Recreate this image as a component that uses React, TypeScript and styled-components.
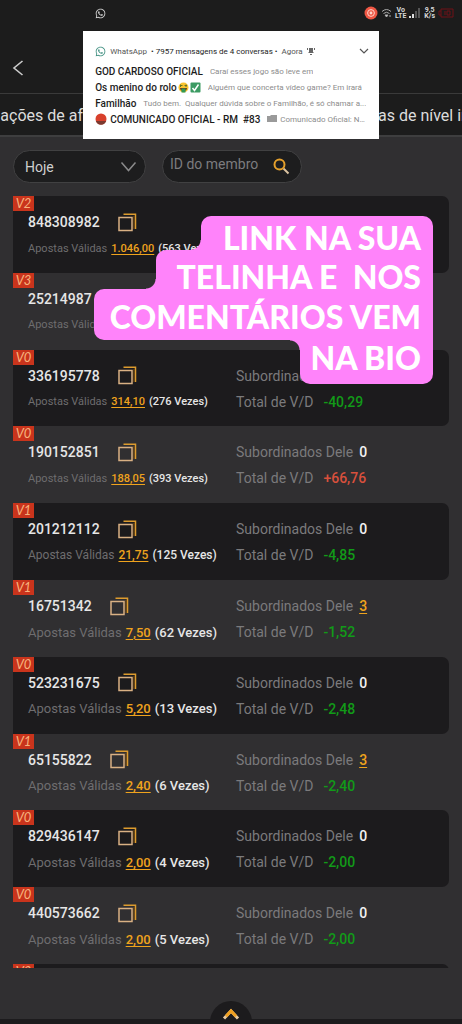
import React from "react";
import styled, { createGlobalStyle } from "styled-components";
import { FaWhatsapp } from "react-icons/fa";

const GlobalStyle = createGlobalStyle`
  * { box-sizing: border-box; }
  body {
    margin: 0;
    background: #302f31;
    font-family: Roboto, "Liberation Sans", sans-serif;
    color: #e6e6e6;
  }
  button, input, select { font: inherit; color: inherit; }
  svg { flex-shrink: 0; }
`;

const Page = styled.div`
  position: relative;
  display: flex;
  flex-direction: column;
  min-height: 100vh;
  overflow: hidden;
`;

const StatusBar = styled.div`
  display: flex;
  align-items: center;
  justify-content: space-between;
  height: 26px;
  padding: 0 8px 0 95px;
  background: #1c1c1c;
  color: #d8d8d8;
`;

const StatusIcons = styled.div`
  display: flex;
  align-items: center;
  gap: 3px;
`;

const Stacked = styled.span`
  font-size: 7px;
  line-height: 6px;
  font-weight: 700;
  text-align: center;
`;

const TitleBar = styled.header`
  display: flex;
  align-items: center;
  height: 68px;
  padding: 16px 0 0 4px;
  background: #1c1c1c;
  border-bottom: 1px solid #3a3a3a;
`;

const BackButton = styled.button`
  display: grid;
  place-items: center;
  width: 28px;
  height: 28px;
  padding: 0;
  border: 0;
  background: none;
`;

const TabStrip = styled.nav`
  display: grid;
  grid-template-columns: 83px 1fr 84px;
  height: 43px;
  background: #1c1c1c;
  border-bottom: 2px solid #3e3e3f;
  line-height: 43px;
  font-size: 16px;
`;

const TabText = styled.a<{ $end?: boolean }>`
  display: flex;
  justify-content: ${(p) => (p.$end ? "flex-end" : "flex-start")};
  overflow: hidden;
  white-space: nowrap;
  color: #dcdcdc;
  text-decoration: none;
`;

const Notification = styled.section`
  position: absolute;
  top: 31px;
  left: 18%;
  right: 18%;
  height: 108px;
  padding: 12px 10px 0 12px;
  background: #fff;
  color: #1c1c1c;
`;

const NoticeHead = styled.div`
  display: flex;
  align-items: center;
  gap: 4px;
  height: 16px;
  margin-bottom: 4px;
  font-size: 8px;
  white-space: nowrap;
`;

const NoticeApp = styled.span`
  color: #555;
`;

const NoticeToggle = styled.button`
  display: grid;
  margin-left: auto;
  padding: 0;
  border: 0;
  background: none;
`;

const NoticeLine = styled.div`
  display: flex;
  align-items: center;
  height: 16px;
  white-space: nowrap;
  font-size: 8px;
`;

const Sender = styled.strong`
  display: flex;
  align-items: center;
  gap: 1px;
  margin-right: 7px;
  font-size: 10px;
  font-weight: 500;
`;

const Snippet = styled.span`
  color: #8c8c8c;
  overflow: hidden;
  text-overflow: ellipsis;
`;

const Filters = styled.form`
  display: flex;
  gap: 16px;
  padding: 13px 14px 13px 13px;
`;

const Pill = styled.div<{ $width: number }>`
  position: relative;
  display: flex;
  align-items: center;
  width: ${(p) => p.$width}px;
  height: 33px;
  border: 1px solid #414142;
  border-radius: 17px;
  background: #1d1d1e;
  font-size: 14px;
`;

const PeriodSelect = styled.select`
  appearance: none;
  width: 100%;
  height: 100%;
  padding: 0 36px 0 11px;
  border: 0;
  background: none;
  outline: none;
  color: #cfcfcf;
`;

const SelectArrow = styled.svg`
  position: absolute;
  right: 8px;
  pointer-events: none;
`;

const MemberInput = styled.input`
  flex: 1;
  min-width: 0;
  height: 100%;
  padding: 0 0 6px 7px;
  border: 0;
  background: none;
  outline: none;
  &::placeholder { color: #7c7c7e; opacity: 1; }
`;

const SearchButton = styled.button`
  display: grid;
  padding: 0;
  margin-right: 11px;
  border: 0;
  background: none;
`;

const List = styled.ul`
  display: grid;
  grid-template-rows: repeat(10, 1fr) 4px;
  margin: 0 13px;
  padding: 0;
  height: 772px;
  overflow: hidden;
  list-style: none;
`;

const Row = styled.li`
  position: relative;
  display: grid;
  grid-template-columns: 208px 1fr;
  grid-template-rows: 26px 26px;
  align-content: start;
  align-items: center;
  padding: 13px 0 0 15px;
  border-radius: 0 7px 7px 0;
  &:nth-child(odd) { background: #1c1b1d; }
`;

const Level = styled.span`
  position: absolute;
  top: 0;
  left: 0;
  width: 21px;
  height: 15px;
  background: #c9341c;
  color: #f7b27c;
  font: italic 13px/15px Lato, sans-serif;
  text-align: center;
`;

const Member = styled.div`
  display: flex;
  align-items: center;
  gap: 18px;
  font-size: 14px;
  font-weight: 500;
`;

const CopyButton = styled.button`
  display: grid;
  padding: 0;
  border: 0;
  background: none;
`;

const Bets = styled.div<{ $size: number }>`
  display: flex;
  gap: 4px;
  font-size: ${(p) => p.$size}px;
  color: #6e6d6f;
  white-space: nowrap;
`;

const Gold = styled.a`
  color: #efa31d;
  font-weight: 500;
  text-decoration: underline;
  text-underline-offset: 2px;
`;

const Times = styled.span`
  color: #e6e6e6;
  font-weight: 500;
`;

const Stat = styled.div`
  display: flex;
  gap: 6px;
  font-size: 14px;
  color: #7b7a7c;
  white-space: nowrap;
`;

const Count = styled.span`
  color: #f2f2f2;
  font-weight: 500;
`;

const Balance = styled.span<{ $gain: boolean }>`
  margin-left: 4px;
  color: ${(p) => (p.$gain ? "#d8503c" : "#129a18")};
  font-weight: 500;
`;

const Caption = styled.div`
  position: absolute;
  top: 216px;
  right: 29px;
  display: flex;
  flex-direction: column;
  align-items: flex-end;
  color: #fff;
  font: 900 32px/24px Lato, sans-serif;
  white-space: pre;
`;

const CaptionLine = styled.div<{
  $width: number;
  $pad: string;
  $radius: string;
  $join?: "top" | "bottom";
}>`
  position: relative;
  width: ${(p) => p.$width}px;
  padding: ${(p) => p.$pad};
  border-radius: ${(p) => p.$radius};
  background: #ff83fa;
  text-align: right;
  &::before {
    content: ${(p) => (p.$join ? '""' : "none")};
    position: absolute;
    left: -10px;
    ${(p) => p.$join ?? "top"}: 0;
    width: 10px;
    height: 10px;
    background: radial-gradient(
      circle at 0 ${(p) => (p.$join === "top" ? "100%" : "0")},
      transparent 9px,
      #ff83fa 10px
    );
  }
`;

const Footer = styled.footer`
  display: flex;
  justify-content: center;
  align-items: flex-end;
  flex: 1;
  border-bottom: 5px solid #1c1b1d;
`;

const UpButton = styled.button`
  display: grid;
  justify-items: center;
  width: 42px;
  height: 23px;
  margin-bottom: -5px;
  padding: 7px 0 0;
  border: 0;
  border-radius: 21px 21px 0 0;
  background: #1c1b1d;
`;

type Entry = {
  level: string;
  id: string;
  bet?: string;
  times?: number;
  size: number;
  subs?: number;
  balance?: string;
};

const entries: Entry[] = [
  { level: "V2", id: "848308982", bet: "1.046,00", times: 563, size: 11 },
  { level: "V3", id: "25214987", size: 11 },
  { level: "V0", id: "336195778", bet: "314,10", times: 276, size: 11, subs: 0, balance: "-40,29" },
  { level: "V0", id: "190152851", bet: "188,05", times: 393, size: 11, subs: 0, balance: "+66,76" },
  { level: "V1", id: "201212112", bet: "21,75", times: 125, size: 12, subs: 0, balance: "-4,85" },
  { level: "V1", id: "16751342", bet: "7,50", times: 62, size: 13, subs: 3, balance: "-1,52" },
  { level: "V0", id: "523231675", bet: "5,20", times: 13, size: 13, subs: 0, balance: "-2,48" },
  { level: "V1", id: "65155822", bet: "2,40", times: 6, size: 13, subs: 3, balance: "-2,40" },
  { level: "V0", id: "829436147", bet: "2,00", times: 4, size: 13, subs: 0, balance: "-2,00" },
  { level: "V0", id: "440573662", bet: "2,00", times: 5, size: 13, subs: 0, balance: "-2,00" },
];

const CopyIcon = () => (
  <svg width="19" height="19" viewBox="0 0 19 19" fill="none" stroke="#dd9c2e" strokeWidth="1.5">
    <path d="M1 4.500h13v13H1z" stroke="#d9b184" />
    <path d="M5.500 1.200h12V16" />
    <path d="M16 3v13" stroke="#7d5010" strokeWidth="1" />
  </svg>
);

const MoneyFace = () => (
  <svg width="11" height="11" viewBox="0 0 22 22">
    <circle cx="11" cy="11" r="10" fill="#f9c32f" />
    <path d="M4 7h5M13 7h5M5 5v5M16 5v5" stroke="#64752b" strokeWidth="2" />
    <path d="M4 12h14c0 4-3 6-7 6s-7-2-7-6z" fill="#6d3820" />
    <path d="M7 13h8v8H7z" fill="#2f9a56" />
  </svg>
);

const CheckBox = () => (
  <svg width="11" height="11" viewBox="0 0 22 22">
    <rect x="1" y="1" width="20" height="20" rx="2" fill="#3c9b63" />
    <path d="M5 12l4 5 8-12" fill="none" stroke="#fff" strokeWidth="3" />
  </svg>
);

export default function App() {
  return (
    <Page>
      <GlobalStyle />
      <StatusBar>
        <FaWhatsapp size={11} />
        <StatusIcons>
          <svg width="14" height="14" viewBox="0 0 14 14">
            <circle cx="7" cy="7" r="6.5" fill="#ef5744" />
            <circle cx="7" cy="7" r="3.4" fill="none" stroke="#ffd4ca" />
            <circle cx="7" cy="7" r="1.4" fill="#ffd4ca" />
          </svg>
          <svg width="11" height="10" viewBox="0 0 11 10" fill="none" stroke="#aaa">
            <path d="M1 3.5q4.5-4 9 0M2.5 5.5q3-2.500 6 0" />
            <path d="M4 7h3L5.500 9zM9 7v2" fill="#ddd" />
          </svg>
          <Stacked>Vo<br />LTE</Stacked>
          <svg width="12" height="10" viewBox="0 0 12 10">
            <path d="M0 8h2v2H0zM3 6h2v4H3z" fill="#ddd" />
            <path d="M6 3h2v7H6zM9 0h2v10H9z" fill="#555" />
          </svg>
          <Stacked>9,5<br />K/s</Stacked>
          <svg width="16" height="10" viewBox="0 0 16 10" fill="none" stroke="#701116">
            <path d="M3 1h12v8H3zM3 3H1v4h2" />
            <path d="M7 3v4M9 3h3v4H9z" />
          </svg>
        </StatusIcons>
      </StatusBar>

      <TitleBar>
        <BackButton aria-label="Voltar">
          <svg width="12" height="16" viewBox="0 0 12 16" fill="none" stroke="#ccc" strokeWidth="1.6">
            <path d="M10.500 1L2 8l8.500 7" />
          </svg>
        </BackButton>
      </TitleBar>

      <TabStrip>
        <TabText href="#afiliados" $end>mações de af</TabText>
        <span />
        <TabText href="#nivel">as de nível in</TabText>
      </TabStrip>

      <Filters>
        <Pill $width={133}>
          <PeriodSelect aria-label="Período" defaultValue="Hoje">
            <option>Hoje</option>
          </PeriodSelect>
          <SelectArrow width="17" height="11" viewBox="0 0 17 11" fill="none" stroke="#8a8a8b" strokeWidth="1.5">
            <path d="M1.500 1.500l7 8 7-8" />
          </SelectArrow>
        </Pill>
        <Pill $width={140}>
          <MemberInput aria-label="ID do membro" placeholder="ID do membro" />
          <SearchButton type="button" aria-label="Buscar">
            <svg width="17" height="17" viewBox="0 0 17 17" fill="none" strokeWidth="2">
              <path d="M10.500 10.500L15.500 15.500" stroke="#dcc3a0" />
              <circle cx="6.500" cy="6.500" r="5" stroke="#e5a02c" />
            </svg>
          </SearchButton>
        </Pill>
      </Filters>

      <List>
        {entries.map((e) => (
          <Row key={e.id}>
            <Level>{e.level}</Level>
            <Member>
              {e.id}
              <CopyButton aria-label="Copiar ID">
                <CopyIcon />
              </CopyButton>
            </Member>
            <Stat>
              {e.subs !== undefined && "Subordinados Dele"}
              {e.subs === 0 && <Count>0</Count>}
              {!!e.subs && <Gold href="#subordinados">{e.subs}</Gold>}
            </Stat>
            <Bets $size={e.size}>
              Apostas Válidas
              {e.bet && <Gold href="#apostas">{e.bet}</Gold>}
              {e.times && <Times>({e.times} Vezes)</Times>}
            </Bets>
            {e.balance && (
              <Stat>
                Total de V/D
                <Balance $gain={e.balance[0] === "+"}>{e.balance}</Balance>
              </Stat>
            )}
          </Row>
        ))}
        <Row>
          <Level>V0</Level>
        </Row>
      </List>

      <Footer>
        <UpButton aria-label="Subir">
          <svg width="18" height="12" viewBox="0 0 18 12" fill="none" strokeWidth="3">
            <path d="M2 10.500l7-7.500 7 7.500" stroke="#e8c9a0" />
            <path d="M4 8.300l5-5.300 5 5.300" stroke="#f0a020" />
          </svg>
        </UpButton>
      </Footer>

      <Caption>
        <CaptionLine $width={232} $pad="10px 12px 0 0" $radius="10px 10px 0 0" $join="bottom">LINK NA SUA</CaptionLine>
        <CaptionLine $width={277} $pad="15px 12px 0 0" $radius="10px 0 0 0" $join="bottom">{"TELINHA E  NOS"}</CaptionLine>
        <CaptionLine $width={339} $pad="16px 12px 11px 0" $radius="10px 0 0 10px">COMENTÁRIOS VEM</CaptionLine>
        <CaptionLine $width={133} $pad="6px 12px 14px 0" $radius="0 0 10px 10px" $join="top">NA BIO</CaptionLine>
      </Caption>

      <Notification>
        <NoticeHead>
          <FaWhatsapp size={11} color="#3f8f80" />
          <NoticeApp>WhatsApp</NoticeApp>
          <span>• 7957 mensagens de 4 conversas •</span>
          <NoticeApp>Agora</NoticeApp>
          <svg width="8" height="8" viewBox="0 0 8 8" fill="#666">
            <path d="M2 1h4v4l1 1H1l1-1zM3 7h2v1H3zM0 1h1v2H0zM7 1h1v2H7z" />
          </svg>
          <NoticeToggle aria-label="Expandir">
            <svg width="10" height="6" viewBox="0 0 10 6" fill="none" stroke="#555" strokeWidth="1.2">
              <path d="M1 1l4 4 4-4" />
            </svg>
          </NoticeToggle>
        </NoticeHead>
        <NoticeLine>
          <Sender>GOD CARDOSO OFICIAL</Sender>
          <Snippet>Caraí esses jogo são leve em</Snippet>
        </NoticeLine>
        <NoticeLine>
          <Sender>Os menino do rolo<MoneyFace /><CheckBox /></Sender>
          <Snippet>Alguém que concerta vídeo game? Em irará</Snippet>
        </NoticeLine>
        <NoticeLine>
          <Sender>Familhão</Sender>
          <Snippet>Tudo bem.&nbsp; Qualquer dúvida sobre o Familhão, é só chamar a...</Snippet>
        </NoticeLine>
        <NoticeLine>
          <Sender>
            <svg width="14" height="12" viewBox="0 0 14 12">
              <circle cx="6" cy="6" r="5.500" fill="#d8402c" />
              <path d="M.8 8a5.500 5.500 0 0 0 10.400 0z" fill="#7b3a30" />
            </svg>
            COMUNICADO OFICIAL - RM&nbsp; #83
          </Sender>
          <Snippet>
            <svg width="11" height="7" viewBox="0 0 11 7">
              <path d="M0 1h3l1-1h6v7H0z" fill="#9a9a9a" />
            </svg>{" "}
            Comunicado Oficial: Nã...
          </Snippet>
        </NoticeLine>
      </Notification>
    </Page>
  );
}
